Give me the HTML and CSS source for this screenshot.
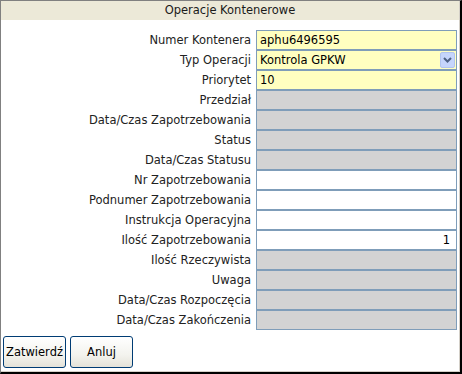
FILE: index.html
```html
<!DOCTYPE html>
<html>
<head>
<meta charset="utf-8">
<link rel="stylesheet" href="styles.css">
</head>
<body>
<div class="panel">
  <div class="title">Operacje Kontenerowe</div>
  <div class="form">
    <label>Numer Kontenera</label><div class="field yellow">aphu6496595</div>
    <label>Typ Operacji</label><div class="field yellow select">Kontrola GPKW<span class="drop"><svg width="9" height="6" viewBox="0 0 9 6"><path d="M1 1 L4.5 4.5 L8 1" fill="none" stroke="#4d6185" stroke-width="2"/></svg></span></div>
    <label>Priorytet</label><div class="field yellow">10</div>
    <label>Przedział</label><div class="field gray"></div>
    <label>Data/Czas Zapotrzebowania</label><div class="field gray"></div>
    <label>Status</label><div class="field gray"></div>
    <label>Data/Czas Statusu</label><div class="field gray"></div>
    <label>Nr Zapotrzebowania</label><div class="field"></div>
    <label>Podnumer Zapotrzebowania</label><div class="field"></div>
    <label>Instrukcja Operacyjna</label><div class="field"></div>
    <label>Ilość Zapotrzebowania</label><div class="field num">1</div>
    <label>Ilość Rzeczywista</label><div class="field gray"></div>
    <label>Uwaga</label><div class="field gray"></div>
    <label>Data/Czas Rozpoczęcia</label><div class="field gray"></div>
    <label>Data/Czas Zakończenia</label><div class="field gray"></div>
  </div>
  <div class="buttons">
    <button class="btn">Zatwierdź</button>
    <button class="btn">Anluj</button>
  </div>
</div>
</body>
</html>
```
FILE: styles.css
```css
html, body {
  margin: 0;
  padding: 0;
  background: #fff;
}
body {
  font-family: "DejaVu Sans", Verdana, sans-serif;
  font-size: 11.5px;
  color: #1a1a1a;
}
.panel {
  box-sizing: border-box;
  width: 462px;
  height: 374px;
  border-left: 1px solid #808080;
  border-top: 1px solid #808080;
  border-right: 2px solid #000;
  border-bottom: 2px solid #000;
  box-shadow: inset -1px -1px 0 #d4d0c8;
  background: #fff;
}
.title {
  height: 19px;
  line-height: 19px;
  background: #ece9d8;
  text-align: center;
  margin-right: 1px;
}
.form {
  display: grid;
  grid-template-columns: 250px 201px;
  column-gap: 5px;
  margin-top: 10px;
}
.form label {
  text-align: right;
  height: 20px;
  line-height: 20px;
  color: #222;
  white-space: nowrap;
}
.field {
  box-sizing: border-box;
  height: 20px;
  border: 1px solid #7f9db9;
  background: #fff;
  line-height: 18px;
  padding: 0 3px;
  position: relative;
  color: #000;
}
.yellow { background: #ffffc0; }
.gray { background: #d3d3d3; }
.num { text-align: right; padding-right: 6px; }
.drop {
  position: absolute;
  right: 1px;
  top: 1px;
  width: 15px;
  height: 16px;
  box-sizing: border-box;
  background: #c5d5fc;
  border: 1px solid #b2c4ee;
  border-radius: 2px;
  display: flex;
  align-items: center;
  justify-content: center;
}
.buttons {
  display: flex;
  gap: 4px;
  margin-top: 6px;
  padding-left: 2px;
}
.btn {
  box-sizing: border-box;
  width: 63px;
  height: 32px;
  border: 1px solid #003c74;
  border-radius: 3px;
  background: linear-gradient(#ffffff, #f3f3ee 60%, #e4e2d8);
  font-family: "DejaVu Sans", Verdana, sans-serif;
  font-size: 11.5px;
  color: #000;
  padding: 0;
}
```
